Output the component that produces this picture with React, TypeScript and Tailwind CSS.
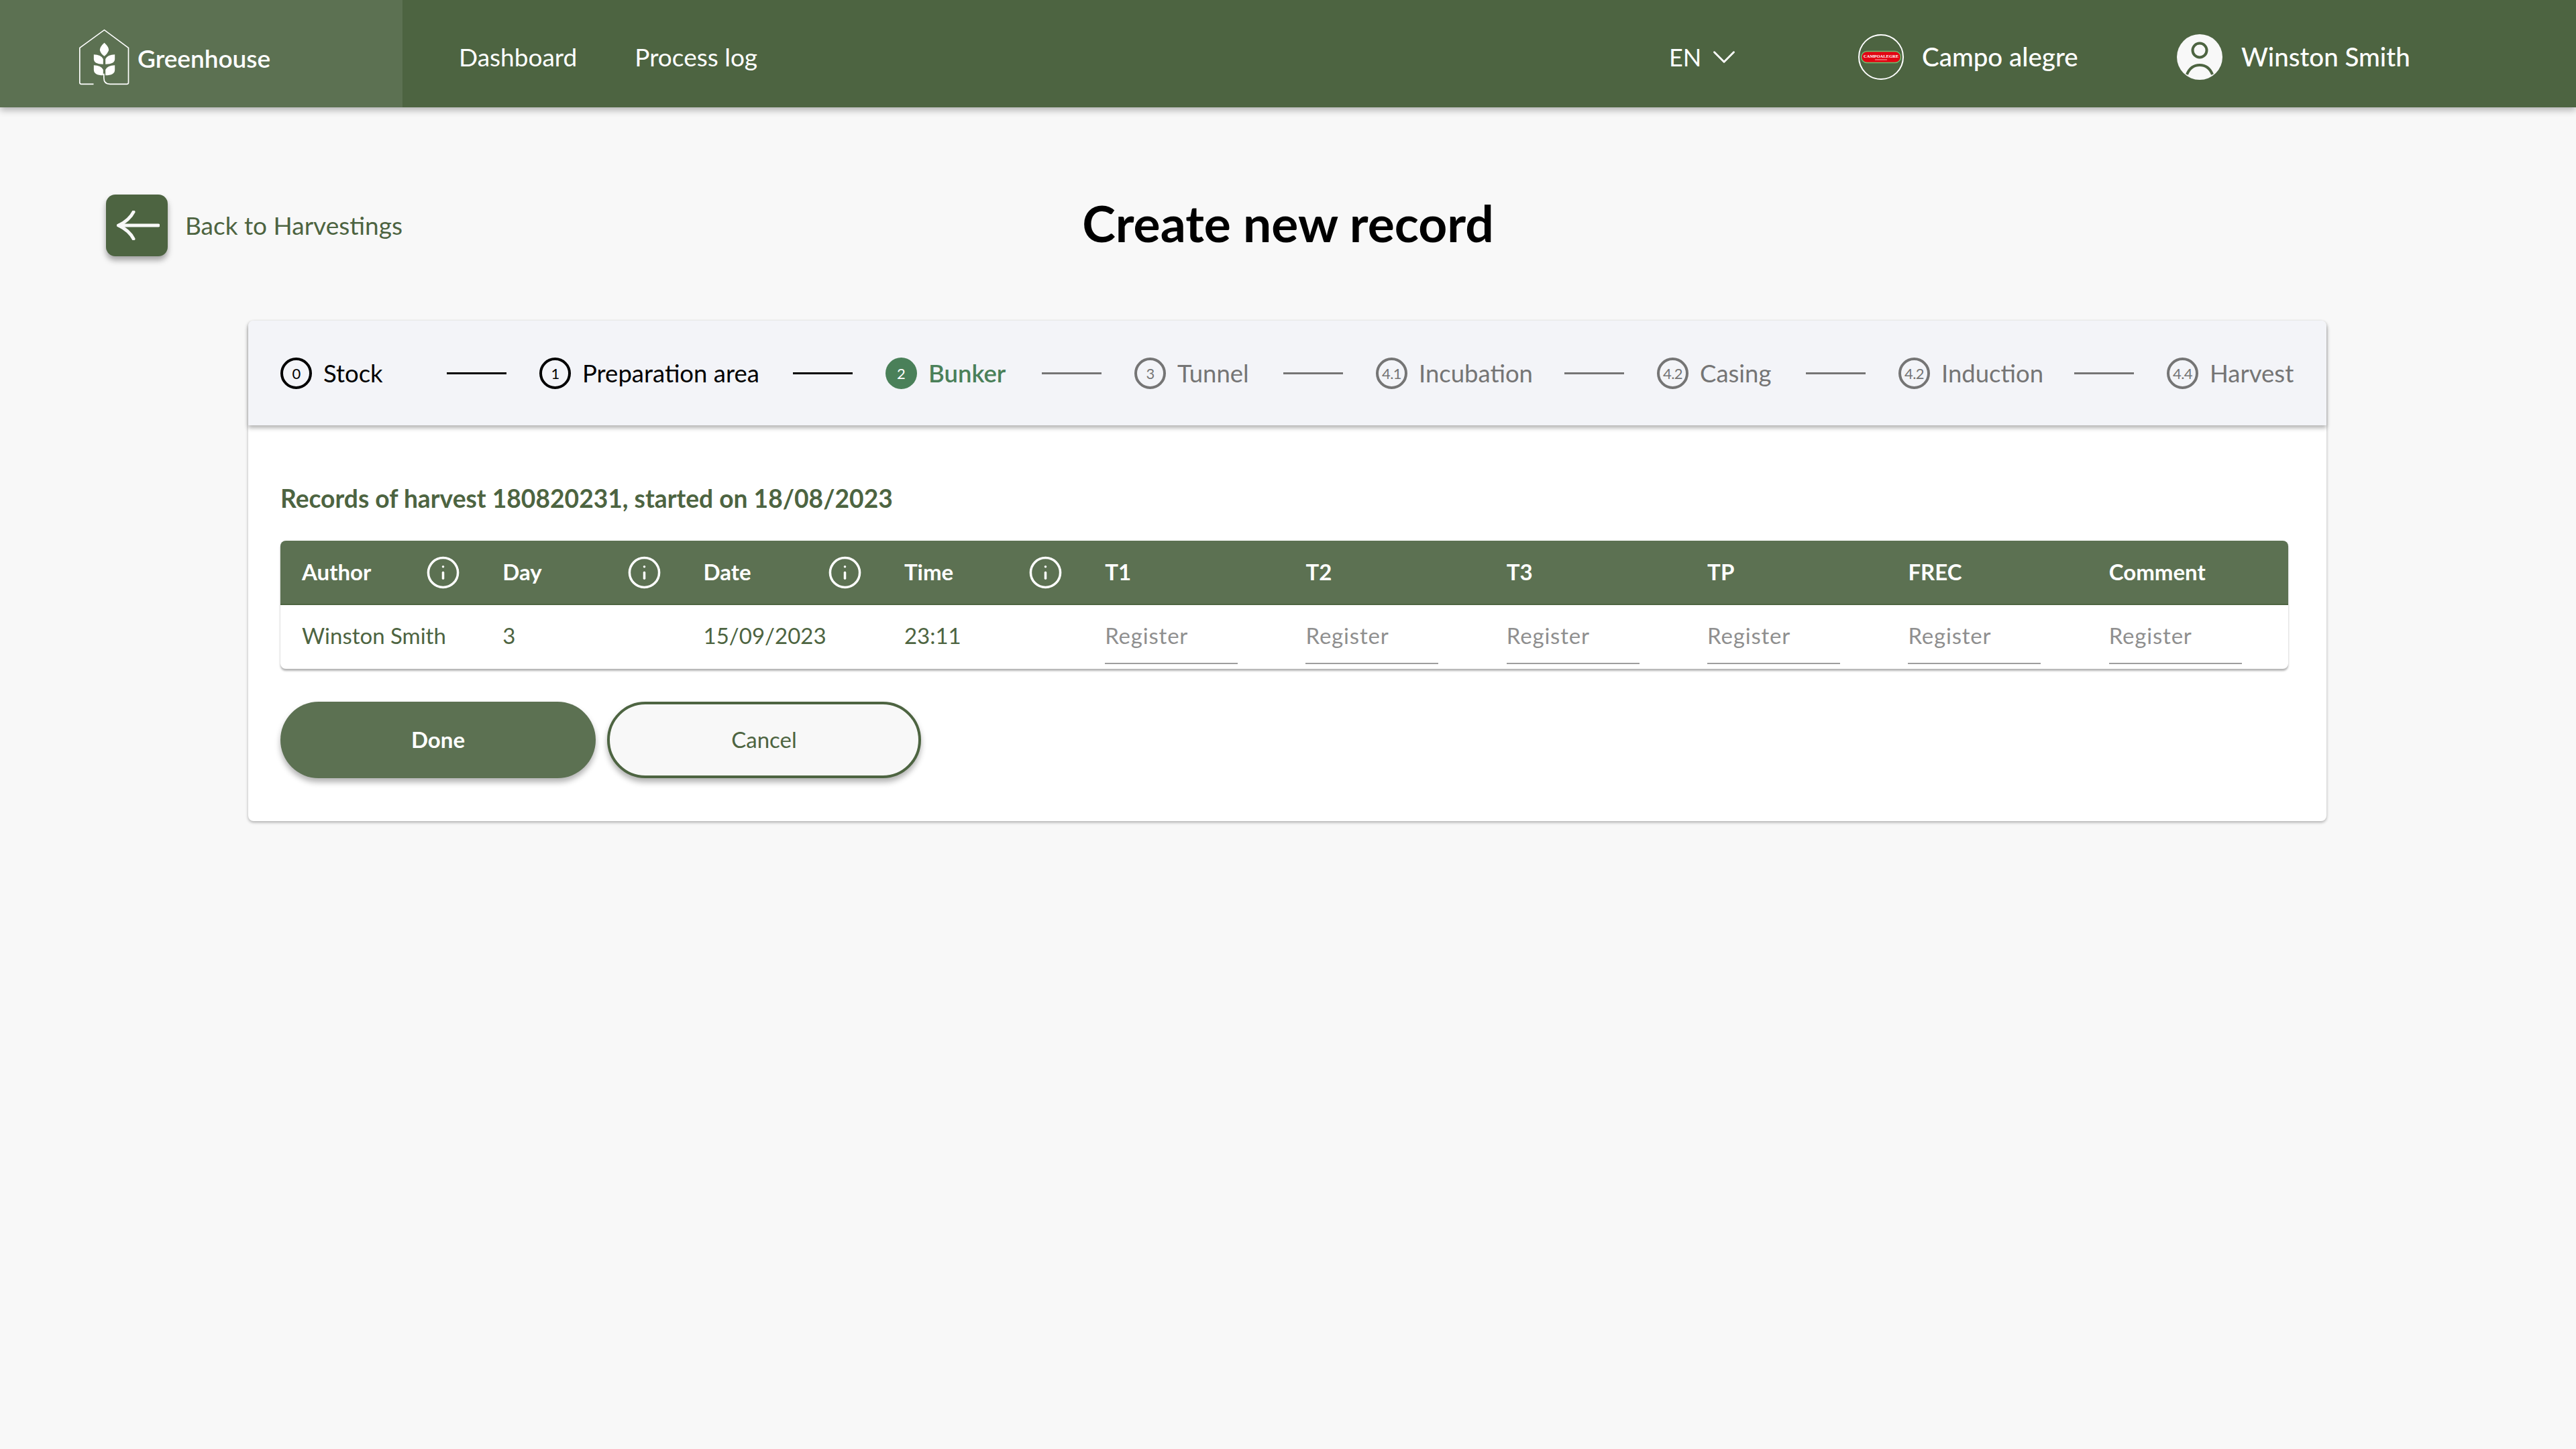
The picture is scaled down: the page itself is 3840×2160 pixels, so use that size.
import { ChevronDown, Info } from "lucide-react";

const steps = [
  { n: "0", label: "Stock", width: "w-[199px]", state: "done" },
  { n: "1", label: "Preparation area", width: "w-[329px]", state: "done" },
  { n: "2", label: "Bunker", width: "w-[184px]", state: "active" },
  { n: "3", label: "Tunnel", width: "w-[173px]", state: "todo" },
  { n: "4.1", label: "Incubation", width: "w-[232px]", state: "todo" },
  { n: "4.2", label: "Casing", width: "w-[173px]", state: "todo" },
  { n: "4.2", label: "Induction", width: "w-[213px]", state: "todo" },
  { n: "4.4", label: "Harvest", width: "w-[190px]", state: "todo" },
];

const columns = [
  { label: "Author", info: true },
  { label: "Day", info: true },
  { label: "Date", info: true },
  { label: "Time", info: true },
  { label: "T1" },
  { label: "T2" },
  { label: "T3" },
  { label: "TP" },
  { label: "FREC" },
  { label: "Comment" },
];

function Logo() {
  return (
    <svg width="77" height="85" viewBox="50 70 230 255" fill="none" className="shrink-0">
      <path
        d="M117 317H62Q55 317 55 310V155L165 75L273 155V310Q273 317 266 317H190Q163 317 163 290V270"
        stroke="#fff"
        strokeWidth="5"
      />
      <path d="M165 132Q185 150 185 165Q180 180 165 192Q148 180 145 165Q145 150 165 132Z" fill="#fff" />
      <path d="M118 185Q150 185 160 205V228Q118 228 118 205Z" fill="#fff" />
      <path d="M212 185Q180 185 170 205V228Q212 228 212 205Z" fill="#fff" />
      <path d="M118 233Q150 233 160 253V278Q118 278 118 253Z" fill="#fff" />
      <path d="M212 233Q180 233 170 253V278Q212 278 212 253Z" fill="#fff" />
    </svg>
  );
}

function CampoLogo() {
  return (
    <svg width="68" height="68" viewBox="0 0 68 68" className="shrink-0">
      <circle cx="34" cy="34" r="33" fill="none" stroke="#fff" strokeWidth="2" />
      <rect x="4.5" y="25.5" width="59" height="17" rx="8.5" fill="#e30613" stroke="#6cc070" strokeWidth="1.5" />
      <text x="34" y="35" textAnchor="middle" fontSize="6.5" fontWeight="700" fill="#fff" fontFamily="Liberation Serif, serif">
        CAMPOALEGRE
      </text>
      <rect x="25" y="37.5" width="18" height="1" fill="#fff" opacity="0.7" />
    </svg>
  );
}

function UserIcon() {
  return (
    <svg width="68" height="68" viewBox="0 0 68 68" className="shrink-0">
      <circle cx="34" cy="34" r="34" fill="#f8f8f8" />
      <circle cx="34" cy="24" r="10.5" fill="none" stroke="#4d6441" strokeWidth="4" />
      <path d="M15 60C19 50 26 46 34 46C42 46 49 50 53 60" fill="none" stroke="#4d6441" strokeWidth="4" />
    </svg>
  );
}

function Header() {
  return (
    <header className="relative z-10 flex h-[160px] items-center bg-[#4d6441] text-white shadow-[0_4px_10px_rgba(0,0,0,0.3)]">
      <div className="flex h-full w-[600px] items-center gap-[11px] bg-[#5c7152] pl-[117px] pt-[10px] text-[37px] font-semibold">
        <Logo />
        <span className="mt-[4px]">Greenhouse</span>
      </div>
      <nav className="ml-[84px] flex items-center gap-[86px] pt-[10px] text-[37px]">
        <a>Dashboard</a>
        <a>Process log</a>
      </nav>
      <div className="ml-auto mr-[248px] flex items-center whitespace-nowrap pt-[10px] text-[38.5px]">
        <div className="-ml-[2px] flex w-[282px] items-center gap-[5px] text-[36px]">
          EN
          <ChevronDown size={58} strokeWidth={1.2} />
        </div>
        <div className="flex w-[475px] items-center gap-[27px] font-medium">
          <CampoLogo />
          Campo alegre
        </div>
        <div className="flex w-[347px] items-center gap-[28px] font-medium">
          <UserIcon />
          Winston Smith
        </div>
      </div>
    </header>
  );
}

function Stepper() {
  return (
    <div className="flex h-[156px] items-center gap-[49px] rounded-t-lg bg-[#f3f4f8] pl-12 text-[36.5px] shadow-[0_4px_6px_rgba(0,0,0,0.3)]">
      {steps.map((s, i) => {
        const color =
          s.state === "done" ? "text-black" : s.state === "active" ? "text-[#4a8059]" : "text-[#757575]";
        return (
          <div key={s.label} className="flex items-center gap-[49px]">
            {i > 0 && <div className={`h-[3px] w-[89px] ${i < 3 ? "bg-black" : "bg-[#757575]"}`} />}
            <div className={`flex items-center gap-[17px] whitespace-nowrap ${s.width} ${color}`}>
              {s.state === "active" ? (
                <span className="flex h-[47px] w-[47px] shrink-0 items-center justify-center rounded-full bg-[#4a8059] text-[22px] text-white">
                  {s.n}
                </span>
              ) : (
                <span className="flex h-[47px] w-[47px] shrink-0 items-center justify-center rounded-full border-[4px] border-current text-[22px] tracking-tight">
                  {s.n}
                </span>
              )}
              <span className={s.state === "active" ? "font-semibold" : ""}>{s.label}</span>
            </div>
          </div>
        );
      })}
    </div>
  );
}

function RecordsTable() {
  return (
    <div className="rounded-lg bg-white text-[33px] shadow-[0_3px_3px_rgba(0,0,0,0.3)]">
      <div className="grid h-[96px] grid-cols-10 items-center rounded-t-lg border-b-2 border-[#4d6441] bg-[#5c7152] font-bold text-white">
        {columns.map((c) => (
          <div key={c.label} className="flex items-center justify-between pl-[32px] pr-[30px]">
            {c.label}
            {c.info && <Info size={53} strokeWidth={1.6} />}
          </div>
        ))}
      </div>
      <div className="grid h-[95px] grid-cols-10 items-center pb-[3px] text-[#4d6441]">
        <div className="pl-[32px]">Winston Smith</div>
        <div className="pl-[32px]">3</div>
        <div className="pl-[32px]">15/09/2023</div>
        <div className="pl-[32px]">23:11</div>
        {columns.slice(4).map((c) => (
          <div key={c.label} className="self-start pl-[32px]">
            <div className="flex h-[88px] w-[198px] items-center border-b-2 border-[#9e9e9e] pt-[5px] tracking-[0.8px] text-[#8f8f8f]">
              Register
            </div>
          </div>
        ))}
      </div>
    </div>
  );
}

export default function App() {
  return (
    <div className="min-h-[2160px] bg-[#f8f8f8] font-[Lato,sans-serif]">
      <Header />
      <main className="pl-[158px]">
        <div className="mt-[130px] grid h-[92px] w-[3524px] grid-cols-[1fr_auto_1fr] items-center">
          <a className="flex items-center gap-[26px] text-[37px] text-[#4d6441]">
            <span className="flex h-[92px] w-[92px] items-center justify-center rounded-[14px] bg-[#4d6441] shadow-[0_6px_8px_rgba(0,0,0,0.35)]">
              <svg width="64" height="44" viewBox="0 0 64 44" fill="none" stroke="#f8f8f8" strokeWidth="5" strokeLinecap="round" className="ml-[3px]">
                <path d="M3 22H62" />
                <path d="M25 2C21 10 13 17 3 22C13 27 21 34 25 42" />
              </svg>
            </span>
            Back to Harvestings
          </a>
          <h1 className="mb-[8px] text-[75px] font-bold leading-none text-black">Create new record</h1>
          <div />
        </div>

        <section className="ml-[212px] mt-[96px] w-[3098px] rounded-lg bg-white shadow-[0_2px_4px_rgba(0,0,0,0.3)]">
          <Stepper />
          <div className="pb-[64px] pl-12 pr-[57px] pt-[85px]">
            <h2 className="mb-[39px] h-[48px] text-[37.2px] font-bold leading-[48px] text-[#4d6441]">
              Records of harvest 180820231, started on 18/08/2023
            </h2>
            <RecordsTable />
            <div className="mt-[49px] flex gap-[17px] text-[33px]">
              <button className="h-[114px] w-[470px] rounded-[57px] bg-[#5c7152] font-bold text-white shadow-[0_6px_8px_rgba(0,0,0,0.3)]">
                Done
              </button>
              <button className="h-[114px] w-[468px] rounded-[57px] border-4 border-[#4d6441] bg-[#f8f8f8] text-[#4d6441] shadow-[0_6px_8px_rgba(0,0,0,0.3)]">
                Cancel
              </button>
            </div>
          </div>
        </section>
      </main>
    </div>
  );
}
